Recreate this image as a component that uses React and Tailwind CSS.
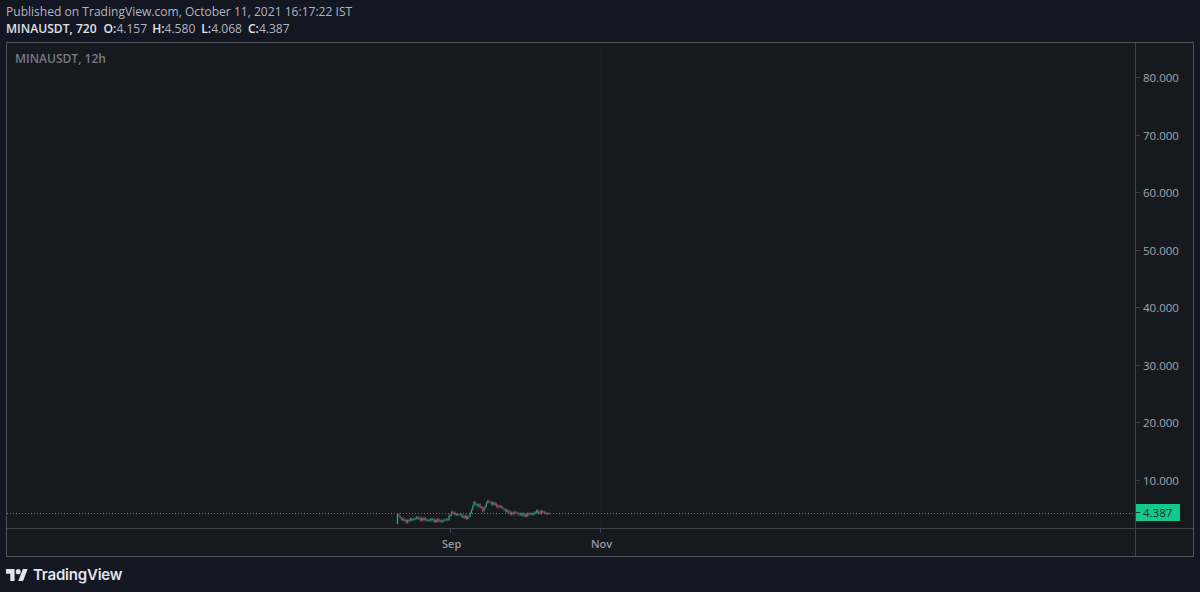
import React from 'react';

const PRICES = ['80.000', '70.000', '60.000', '50.000', '40.000', '30.000', '20.000', '10.000'];

// rough shape of the price line, [x, y] inside the plot svg
const SHAPE = [
  [391, 471], [394, 476], [398, 478], [404, 477], [408, 475], [414, 476], [420, 477], [426, 477],
  [432, 478], [440, 477], [443, 471], [446, 470], [452, 472], [456, 473], [460, 476], [464, 468],
  [467, 460], [472, 463], [476, 467], [478, 463], [481, 458], [486, 461], [491, 463], [497, 466],
  [502, 470], [507, 470], [511, 470], [514, 472], [518, 472], [524, 471], [529, 469], [534, 469],
  [539, 470], [543, 471],
];

function buildCandles() {
  const out = [];
  let prev = SHAPE[0][1];
  let seg = 0;
  for (let x = 392; x <= 543; x += 1.25) {
    while (seg < SHAPE.length - 2 && x > SHAPE[seg + 1][0]) seg++;
    const [x0, y0] = SHAPE[seg];
    const [x1, y1] = SHAPE[seg + 1];
    const base = y0 + ((y1 - y0) * (x - x0)) / (x1 - x0);
    const close = base + Math.sin(x * 2.3) * 1.1 + Math.sin(x * 0.9) * 0.7;
    out.push({ x, open: prev, close, high: Math.min(prev, close) - 1.2, low: Math.max(prev, close) + 1.2 });
    prev = close;
  }
  return out;
}

const CANDLES = buildCandles();

function Chart() {
  return (
    <svg className="absolute inset-0 w-full h-full" aria-hidden="true">
      <line x1="443.5" y1="0" x2="443.5" y2="486" stroke="#1a1e24" />
      <line x1="593.5" y1="0" x2="593.5" y2="486" stroke="#1a1e24" />
      {CANDLES.map((c, i) => {
        const up = c.close < c.open;
        const color = up ? '#2f9e84' : '#a04c5c';
        return (
          <g key={i}>
            <line x1={c.x} x2={c.x} y1={c.high} y2={c.low} stroke={color} strokeWidth="0.6" />
            <rect x={c.x - 0.5} width="1" y={Math.min(c.open, c.close)} height={Math.max(Math.abs(c.open - c.close), 0.8)} fill={color} />
          </g>
        );
      })}
      <line x1="390.5" y1="471" x2="390.5" y2="481" stroke="#1fb08a" strokeWidth="1.3" />
      <line x1="0" y1="470.5" x2="1128" y2="470.5" stroke="#1c9a7a" strokeDasharray="1 2" />
    </svg>
  );
}

function Logo() {
  return (
    <svg viewBox="0 4 36 18" preserveAspectRatio="none" className="w-[22px] h-[12px] shrink-0" fill="#e3e4e8">
      <path d="M14 22H7V11H0V4h14v18z" />
      <circle cx="20" cy="8" r="4" />
      <path d="M28 22h-8l7.5-18h8L28 22z" />
    </svg>
  );
}

export default function App() {
  return (
    <div className="w-[1200px] h-[592px] overflow-hidden flex flex-col bg-[#131722] text-[#b2b5be] font-['Open_Sans','Noto_Sans',sans-serif]">
      <div className="pl-[6px] pt-[4px] h-[42px] text-[12.07px] leading-[16.5px]">
        <p>Published on TradingView.com, October 11, 2021 16:17:22 IST</p>
        <p className="flex">
          <b className="font-semibold text-[#e0e2e8]">MINAUSDT, 720</b>
          <b className="ml-[7px] font-semibold text-[#e0e2e8]">O:</b>4.157
          <b className="ml-[5px] font-semibold text-[#e0e2e8]">H:</b>4.580
          <b className="ml-[6px] font-semibold text-[#e0e2e8]">L:</b>4.068
          <b className="ml-[6px] font-semibold text-[#e0e2e8]">C:</b>4.387
        </p>
      </div>

      <div className="ml-[6px] w-[1188px] h-[515px] shrink-0 border border-[#50545f] bg-[#161a1f] grid grid-cols-[1fr_57px] grid-rows-[1fr_27px]">
        <div className="relative border-r border-b border-[#3e424d] pl-[8px] pt-[7px]">
          <p className="text-[12px] font-semibold text-[#777b85]">MINAUSDT, 12h</p>
          <Chart />
        </div>

        <div className="relative border-b border-[#3e424d] pt-[6px]">
          {PRICES.map(p => (
            <div key={p} className="h-[57.5px] flex items-center gap-[3px] text-[11.5px] text-[#a3a6af]">
              <span className="w-[4px] h-px bg-[#3e424d]" />
              {p}
            </div>
          ))}
          <div className="absolute left-0 top-[461px] w-[44px] h-[17px] flex items-center gap-[3px] bg-[#12c98b] text-[11.5px] text-[#17332c]">
            <span className="w-[4px] h-px bg-[#17332c]" />
            4.387
          </div>
        </div>

        <div className="border-r border-[#3e424d] text-[11px] font-semibold text-[#9699a2]">
          <div className="flex h-[4px] pl-[443px] gap-[149px]">
            <span className="w-px bg-[#3e424d]" />
            <span className="w-px bg-[#3e424d]" />
          </div>
          <div className="flex pl-[435px] pt-[3px]">
            <span className="w-[149px]">Sep</span>
            <span>Nov</span>
          </div>
        </div>
        <div />
      </div>

      <div className="flex items-center gap-[5px] pl-[6px] pt-[9px]">
        <Logo />
        <span className="font-['Inter',sans-serif] text-[15px] font-semibold leading-[18px] tracking-[-0.2px] text-[#e3e4e8]">TradingView</span>
      </div>
    </div>
  );
}
